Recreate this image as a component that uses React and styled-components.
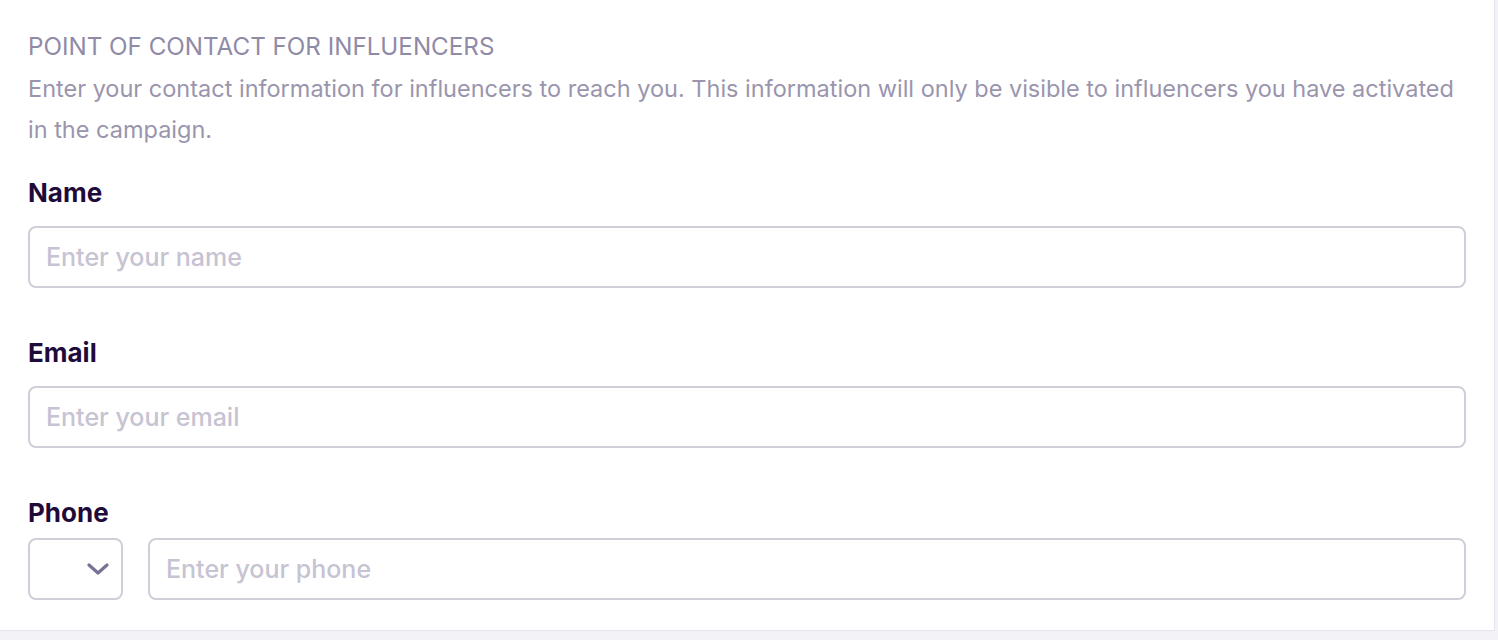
import React from 'react';
import styled, { createGlobalStyle } from 'styled-components';

const GlobalStyle = createGlobalStyle`
  body {
    margin: 0;
    background: #f3f2f7;
    font-family: Inter, "Noto Sans", sans-serif;
  }
`;

const Page = styled.div`
  height: 640px;
  background: #f3f2f7;
  overflow: hidden;
`;

const Card = styled.section`
  width: 1495px;
  box-sizing: border-box;
  background: #fff;
  border-right: 1px solid #e6e4ee;
  border-bottom: 1px solid #e6e4ee;
  padding: 33px 28px 30px 28px;
`;

const Heading = styled.h2`
  margin: 0;
  font-size: 24.2px;
  line-height: 28px;
  font-weight: 400;
  color: #8f8aa6;
  text-transform: uppercase;
`;

const Description = styled.p`
  margin: 7px 0 0;
  font-size: 23.5px;
  line-height: 41px;
  color: #9a95ad;
`;

const Field = styled.div`
  display: flex;
  flex-direction: column;
  margin-top: ${p => p.$first ? '27px' : '49px'};
`;

const Label = styled.label`
  font-size: 26px;
  line-height: 32px;
  font-weight: 700;
  color: #1f0b3a;
  margin-bottom: ${p => p.$tight ? '9px' : '17px'};
`;

const Row = styled.div`
  display: flex;
  gap: 25px;
`;

const TextInput = styled.input`
  flex-grow: 1;
  min-width: 0;
  height: 62px;
  box-sizing: border-box;
  border: 2px solid #d0ced9;
  border-radius: 8px;
  padding: 0 16px;
  font-family: inherit;
  font-size: 25px;
  font-weight: 500;
  color: #1f0b3a;
  background: #fff;
  outline: 0;

  &::placeholder {
    color: #c6c3d3;
  }
`;

const SelectBox = styled.div`
  width: 95px;
  flex-shrink: 0;
  height: 62px;
  box-sizing: border-box;
  border: 2px solid #d0ced9;
  border-radius: 8px;
  display: flex;
  align-items: center;
  justify-content: flex-end;
  padding-right: 12px;
`;

const Chevron = () => (
  <svg width="22" height="14" viewBox="0 0 22 14" fill="none">
    <path d="M2 3 L11 11 L20 3" stroke="#7a7195" strokeWidth="3.2" strokeLinecap="round" strokeLinejoin="round" />
  </svg>
);

export default function App() {
  return (
    <Page>
      <GlobalStyle />
      <Card>
        <Heading>Point of contact for influencers</Heading>
        <Description>
          Enter your contact information for influencers to reach you. This information will only be visible to influencers you have activated in the campaign.
        </Description>

        <Field $first>
          <Label>Name</Label>
          <TextInput placeholder="Enter your name" />
        </Field>

        <Field>
          <Label>Email</Label>
          <TextInput placeholder="Enter your email" />
        </Field>

        <Field>
          <Label $tight>Phone</Label>
          <Row>
            <SelectBox>
              <Chevron />
            </SelectBox>
            <TextInput placeholder="Enter your phone" />
          </Row>
        </Field>
      </Card>
    </Page>
  );
}
